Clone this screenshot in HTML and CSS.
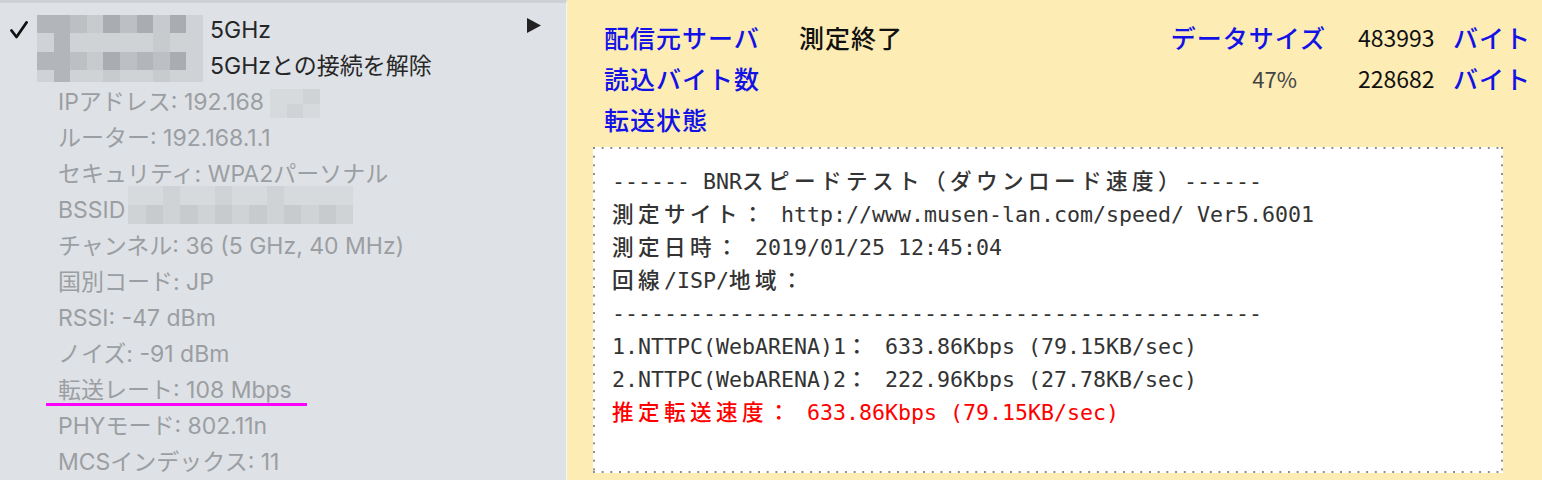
FILE: index.html
```html
<!DOCTYPE html>
<html lang="ja">
<head>
  <meta charset="UTF-8">
  <title>Wi-Fi / BNRスピードテスト</title>
  <link rel="stylesheet" href="styles.css">
</head>
<body>

  <div class="menu">
    <div class="net">
      <svg class="check" width="18" height="18" viewBox="0 0 18 18">
        <path d="M1.5 9.5 L6.5 16 L16.5 1.5" fill="none" stroke="#111" stroke-width="2.8" stroke-linecap="round" stroke-linejoin="round"/>
      </svg>
      <div class="mosaic big">
        <i class="s2"></i><i class="s2"></i><i class="s3"></i><i class="s4"></i><i class="s1"></i><i class="s3"></i><i class="s1"></i><i class="s4"></i><i class="s1"></i><i class="s5"></i>
        <i class="s5"></i><i class="s2"></i><i class="s5"></i><i class="s5"></i><i class="s5"></i><i class="s5"></i><i class="s5"></i><i class="s4"></i><i class="s5"></i><i class="s5"></i>
        <i class="s2"></i><i class="s2"></i><i class="s3"></i><i class="s4"></i><i class="s1"></i><i class="s3"></i><i class="s2"></i><i class="s3"></i><i class="s1"></i><i class="s5"></i>
        <i class="s5"></i><i class="s2"></i><i class="s5"></i><i class="s5"></i><i class="s4"></i><i class="s5"></i><i class="s5"></i><i class="s4"></i><i class="s5"></i><i class="s5"></i>
      </div>
      <div class="net-names">
        <div>5GHz</div>
        <div>5GHzとの接続を解除</div>
      </div>
      <svg class="arrow" width="16" height="17" viewBox="0 0 16 17">
        <path d="M1 1 L15 8.5 L1 16 Z" fill="#222"/>
      </svg>
    </div>

    <ul class="details">
      <li>IPアドレス: 192.168<span class="mosaic ip"><i class="s6"></i><i class="s6"></i><i class="s5"></i><i class="s6"></i><i class="s5"></i><i class="s6"></i></span></li>
      <li>ルーター: 192.168.1.1</li>
      <li>セキュリティ: WPA2パーソナル</li>
      <li>BSSID<span class="mosaic bssid"><i class="s6"></i><i class="s6"></i><i class="s5"></i><i class="s6"></i><i class="s6"></i><i class="s5"></i><i class="s6"></i><i class="s6"></i><i class="s5"></i><i class="s6"></i><i class="s6"></i><i class="s6"></i><i class="s6"></i><i class="s5"></i><i class="s4"></i><i class="s5"></i><i class="s4"></i><i class="s5"></i><i class="s4"></i><i class="s5"></i><i class="s4"></i><i class="s5"></i><i class="s4"></i><i class="s5"></i><i class="s4"></i><i class="s5"></i></span></li>
      <li>チャンネル: 36 (5 GHz, 40 MHz)</li>
      <li>国別コード: JP</li>
      <li>RSSI: -47 dBm</li>
      <li>ノイズ: -91 dBm</li>
      <li class="marked">転送レート: 108 Mbps</li>
      <li>PHYモード: 802.11n</li>
      <li>MCSインデックス: 11</li>
    </ul>
  </div>

  <div class="speed">
    <div class="stat">
      <span class="label">配信元サーバ</span>
      <span class="state">測定終了</span>
      <span class="label size">データサイズ</span>
      <span class="num">483993</span>
      <span class="label">バイト</span>

      <span class="label">読込バイト数</span>
      <span></span>
      <span class="pct">47%</span>
      <span class="num">228682</span>
      <span class="label">バイト</span>

      <span class="label">転送状態</span>
    </div>

    <div class="result">
      <div>------ BNR<span class="w">スピードテスト（ダウンロード速度）</span>------</div>
      <div><span class="w">測定サイト：</span> http://www.musen-lan.com/speed/ Ver5.6001</div>
      <div><span class="w">測定日時：</span> 2019/01/25 12:45:04</div>
      <div><span class="w">回線</span>/ISP/<span class="w">地域：</span></div>
      <div>--------------------------------------------------</div>
      <div>1.NTTPC(WebARENA)1<span class="w">：</span> 633.86Kbps (79.15KB/sec)</div>
      <div>2.NTTPC(WebARENA)2<span class="w">：</span> 222.96Kbps (27.78KB/sec)</div>
      <div class="est"><span class="w">推定転送速度：</span> 633.86Kbps (79.15KB/sec)</div>
    </div>
  </div>

</body>
</html>
```

FILE: styles.css
```css
body {
  margin: 0;
  height: 480px;
  overflow: hidden;
  display: flex;
  background: #fdecb4;
}

/* wifi menu */
.menu {
  width: 567px;
  flex: none;
  box-sizing: border-box;
  padding: 9px 24px 0 10px;
  background: #dee2e6;
  border-top: 3px solid #cdd1d5;
  border-right: 1px solid #f5f6f7;
  font-family: "Inter", "Noto Sans CJK JP", sans-serif;
  font-size: 23px;
  line-height: 36px;
}
.net {
  display: flex;
  align-items: flex-start;
}
.check {
  margin-top: 9px;
  flex: none;
}
.mosaic {
  display: grid;
}
.mosaic i {
  display: block;
}
.mosaic.big {
  width: 166px;
  flex: none;
  margin: 3px 0 0 9px;
  grid-template-columns: repeat(10, 1fr);
  grid-template-rows: 18px 19px 18px 12px;
}
.net-names {
  margin-left: 7px;
  color: #262626;
}
.arrow {
  margin: 5px 0 0 auto;
}
.s1 { background: #a9adb1; }
.s2 { background: #b2b6ba; }
.s3 { background: #bcc0c3; }
.s4 { background: #c7cbce; }
.s5 { background: #d0d3d6; }
.s6 { background: #d7dadd; }

.details {
  list-style: none;
  margin: 0;
  padding: 0 0 0 48px;
  color: #9b9ea2;
}
.details li {
  position: relative;
  height: 36px;
  white-space: nowrap;
}
.mosaic.ip,
.mosaic.bssid {
  display: inline-grid;
  vertical-align: top;
}
.mosaic.ip {
  width: 50px;
  grid-template-columns: repeat(3, 1fr);
  grid-template-rows: 15px 14px;
  margin: 5px 0 0 6px;
}
.mosaic.bssid {
  width: 225px;
  grid-template-columns: repeat(13, 1fr);
  grid-template-rows: 19px 19px;
  margin: -6px 0 0 3px;
}
.marked::after {
  content: "";
  position: absolute;
  left: -12px;
  width: 261px;
  bottom: 2px;
  height: 3px;
  background: #ff00ff;
}

/* speed test */
.speed {
  flex: 1;
  padding: 17px 0 0 26px;
}
.stat {
  display: grid;
  grid-template-columns: 195px 1fr auto 95px auto;
  padding: 0 11px;
  font-family: "Noto Sans CJK JP", sans-serif;
  font-weight: 500;
  font-size: 25px;
  line-height: 41px;
}
.label {
  color: #1212e6;
  letter-spacing: 1px;
}
.size {
  padding-right: 32px;
}
.state {
  color: #111;
  letter-spacing: 1px;
}
.num {
  color: #111;
  font-size: 23px;
  font-weight: normal;
}
.pct {
  justify-self: end;
  margin-right: 61px;
  color: #444;
  font-size: 22px;
  font-weight: normal;
}
.result {
  width: 910px;
  height: 326px;
  box-sizing: border-box;
  margin-top: 7px;
  padding: 18px 19px;
  background-color: #fff;
  background-image:
    linear-gradient(90deg, #8c8c8c 2px, transparent 2px),
    linear-gradient(90deg, #8c8c8c 2px, transparent 2px),
    linear-gradient(180deg, #8c8c8c 2px, transparent 2px),
    linear-gradient(180deg, #8c8c8c 2px, transparent 2px);
  background-size: 8.7px 2px, 8.7px 2px, 2px 8.7px, 2px 8.7px;
  background-position: left top, left bottom, left top, right top;
  background-repeat: repeat-x, repeat-x, repeat-y, repeat-y;
  font-family: "DejaVu Sans Mono", "Noto Sans CJK JP", monospace;
  font-size: 21.6px;
  line-height: 33px;
  color: #333;
}
.result div {
  white-space: pre;
}
.w {
  font-weight: 500;
  letter-spacing: 4.4px;
}
.est {
  color: #f00;
}
```
